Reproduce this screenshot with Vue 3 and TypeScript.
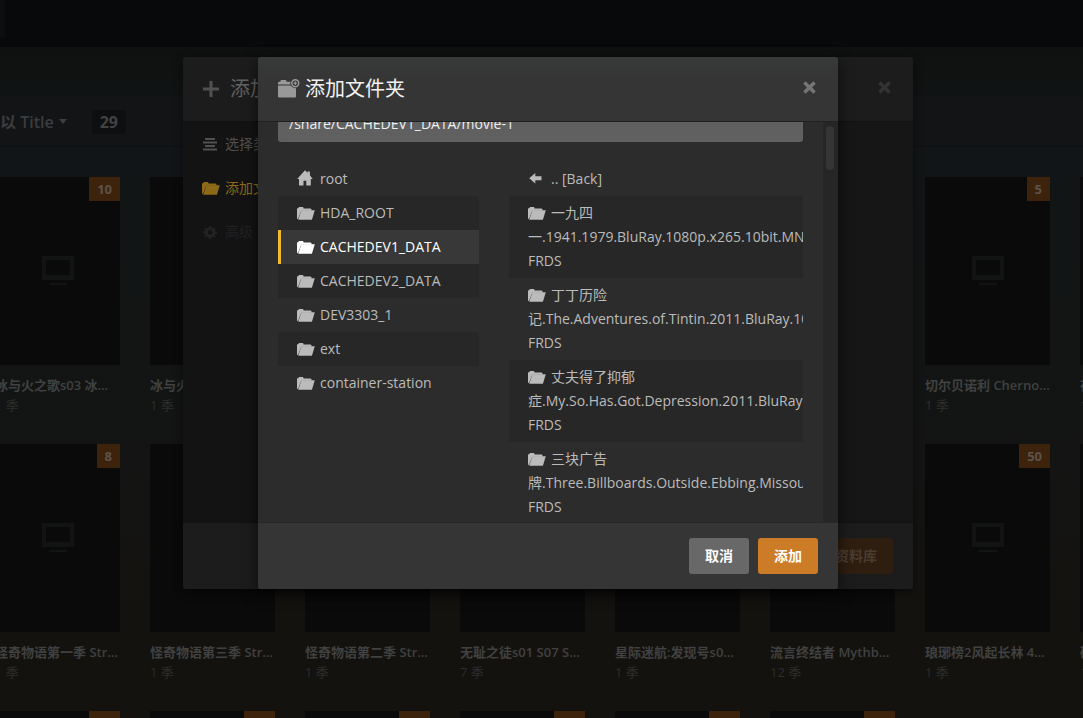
<script setup lang="ts">
import { onMounted, ref } from 'vue'

interface Show { title?: string; seasons?: string; badge?: string }

const firstRow: Show[] = [
  { title: '冰与火之歌s03 冰与火', seasons: '1 季', badge: '10' },
  { title: '冰与火之歌', seasons: '1 季' },
  {}, {}, {}, {},
  { title: '切尔贝诺利 Chernobyl', seasons: '1 季', badge: '5' },
  { title: '夜', seasons: '1 季' },
]
const secondRow: Show[] = [
  { title: '怪奇物语第一季 Stranger', seasons: '1 季', badge: '8' },
  { title: '怪奇物语第三季 Stranger', seasons: '1 季' },
  { title: '怪奇物语第二季 Stranger', seasons: '1 季' },
  { title: '无耻之徒s01 S07 Shameless', seasons: '7 季' },
  { title: '星际迷航:发现号s01 Star', seasons: '1 季' },
  { title: '流言终结者 Mythbusters', seasons: '12 季' },
  { title: '琅琊榜2风起长林 4K.2017', seasons: '1 季', badge: '50' },
  { title: '破', seasons: '1 季' },
]
const thirdRow: Show[] = Array.from({ length: 6 }, () => ({ badge: '10' }))
const rows = [firstRow, secondRow, thirdRow]

const roots = ['root', 'HDA_ROOT', 'CACHEDEV1_DATA', 'CACHEDEV2_DATA', 'DEV3303_1', 'ext', 'container-station']
const selected = ref('CACHEDEV1_DATA')
const folders = [
  '一九四一.1941.1979.BluRay.1080p.x265.10bit.MNHD-FRDS',
  '丁丁历险记.The.Adventures.of.Tintin.2011.BluRay.1080p.x265.10bit.MNHD-FRDS',
  '丈夫得了抑郁症.My.So.Has.Got.Depression.2011.BluRay.1080p.x265.10bit.MNHD-FRDS',
  '三块广告牌.Three.Billboards.Outside.Ebbing.Missouri.2017.BluRay.1080p.MNHD-FRDS',
]
const path = ref('/share/CACHEDEV1_DATA/movie-1')
const scroller = ref<HTMLElement | null>(null)

onMounted(() => {
  if (scroller.value) scroller.value.scrollTop = 36
})
</script>

<template>
  <div class="page">
    <svg class="defs" width="0" height="0" aria-hidden="true">
      <symbol id="folder" viewBox="0 0 18 13">
        <path d="M0 11.500V1.500L1.500 1V.4L2.200 0h3.600l.7.700V1.500h7.200l.8.800v1.400H4.300L.9 12.300z" />
        <path d="M4.500 3.200h13.300L14.900 12.800H1.200z" />
      </symbol>
      <symbol id="home" viewBox="0 0 16 16">
        <path d="M8 .3L10.500 2.800V1.500h2.400v3.800L15.700 9H13.800v6.500H9.300V10.700H6.500v4.800H2V9H.2z" />
      </symbol>
      <symbol id="back" viewBox="0 0 13 11">
        <path d="M6.300 0v3.300H12.500v4H6.300v3.300L.2 5.300z" />
      </symbol>
      <symbol id="close" viewBox="0 0 12 12">
        <path d="M2.500.2L6 3.600 9.500.2 11.800 2.500 8.400 6l3.400 3.500-2.300 2.300L6 8.400 2.500 11.800.2 9.500 3.600 6 .2 2.500z" />
      </symbol>
      <symbol id="monitor" viewBox="0 0 32 30">
        <path fill-rule="evenodd" d="M0 0h32v24H0zM4 4v15h24V4z" />
        <path d="M7 27h18v2H7z" />
      </symbol>
    </svg>

    <header class="topbar"><span class="search-end"></span></header>
    <div class="spacer"></div>
    <div class="toolbar">
      <button class="sort" type="button">以 Title <span class="caret"></span></button>
      <span class="count">29</span>
    </div>
    <main class="library">
      <div v-for="(row, r) in rows" :key="r" class="row">
        <article v-for="(show, i) in row" :key="i" class="card">
          <div class="cover">
            <svg class="monitor"><use href="#monitor" /></svg>
            <span v-if="show.badge" class="badge">{{ show.badge }}</span>
          </div>
          <h3 v-if="show.title" class="title">{{ show.title }}</h3>
          <p v-if="show.seasons" class="seasons">{{ show.seasons }}</p>
        </article>
      </div>
    </main>

    <div class="overlay">
      <section class="dialog wizard" aria-label="添加资料库">
        <header class="head">
          <svg class="plus" viewBox="0 0 16 16"><path d="M6.500 0h3v6.500H16v3H9.500V16h-3V9.500H0v-3h6.500z" /></svg>
          <h2>添加资料库</h2>
          <button class="close" type="button" aria-label="关闭"><svg><use href="#close" /></svg></button>
        </header>
        <div class="body">
          <nav class="steps">
            <a href="#type"><svg viewBox="0 0 18 13"><path d="M3 0h10v2H3zM1 3.500h14v2H1zM3 7h10v2H3zM1 10.500h14v2H1z" /></svg>选择类型</a>
            <a href="#folders" class="current"><svg><use href="#folder" /></svg>添加文件夹</a>
            <a href="#advanced" class="disabled"><svg viewBox="0 0 18 14"><path fill-rule="evenodd" d="M7 0h2l.5 2 1.300.6L12.600 1.500 14 3l-1 1.700.6 1.300 2 .5v1.500l-2 .5-.6 1.300 1 1.700L12.600 12.500l-1.800-1-1.300.5L9 14H7l-.5-2-1.300-.5-1.800 1L2 11l1-1.700L2.400 8 .5 7.500V6l2-.5L3 4.200 2 3l1.400-1.500 1.800 1.100L6.500 2zM8 4.500a2.500 2.500 0 100 5 2.500 2.500 0 000-5z" /></svg>高级</a>
          </nav>
        </div>
        <footer class="foot"><button class="btn primary" type="button">添加资料库</button></footer>
      </section>
    </div>

    <div class="overlay">
      <section class="dialog browser" role="dialog" aria-label="添加文件夹">
        <header class="head">
          <svg class="folder-add" viewBox="0 0 22 20">
            <path d="M0 5.500V3.500L1 2.800h1.500V1.500L3.500 1h4l1 .7v1.100H13v2.700z" />
            <path d="M0 6.500h18V17.500l-.7.900H.8L0 17.500z" />
            <circle class="ring" cx="17.300" cy="4.200" r="5" />
            <path fill-rule="evenodd" d="M17.300 0a4.200 4.200 0 110 8.400 4.200 4.200 0 010-8.400zm0 1.500a2.700 2.700 0 100 5.400 2.700 2.700 0 000-5.400z" />
            <path d="M16.700 2.500h1.200v1.100H19v1.200h-1.100v1.100h-1.200V4.800h-1.100V3.600h1.100z" />
          </svg>
          <h2>添加文件夹</h2>
          <button class="close" type="button" aria-label="关闭"><svg><use href="#close" /></svg></button>
        </header>
        <div class="body">
          <div ref="scroller" class="scroller">
            <input v-model="path" class="path" type="text" aria-label="路径" />
            <div class="columns">
              <ul class="roots">
                <li v-for="name in roots" :key="name">
                  <a href="#" :class="{ selected: selected === name }" @click.prevent="selected = name"><svg v-if="name === 'root'" class="home"><use href="#home" /></svg><svg v-else class="folder"><use href="#folder" /></svg>{{ name }}</a>
                </li>
              </ul>
              <ul class="folders">
                <li><a href="#" @click.prevent><svg class="back"><use href="#back" /></svg>.. [Back]</a></li>
                <li v-for="name in folders" :key="name">
                  <a href="#" @click.prevent><svg class="folder"><use href="#folder" /></svg>{{ name }}</a>
                </li>
              </ul>
            </div>
          </div>
          <div class="track"><div class="thumb"></div></div>
        </div>
        <footer class="foot">
          <button class="btn" type="button">取消</button>
          <button class="btn primary" type="button">添加</button>
        </footer>
      </section>
    </div>
  </div>
</template>

<style>
html, body { background: #111211; overflow: hidden; }
</style>

<style scoped>
* { box-sizing: border-box; }
.page {
  position: relative;
  height: 100vh;
  overflow: hidden;
  background: linear-gradient(#0f1110 7%, #121517 20%, #121514 45%, #131413 65%, #14120f 85%, #13120f);
  font-family: "Open Sans", "Noto Sans CJK SC", sans-serif;
  font-size: 14px;
  line-height: 24px;
  color: #bbb;
}
.defs { position: absolute; }
svg { fill: currentColor; }
button { font: inherit; border: 0; cursor: pointer; }
a { color: inherit; text-decoration: none; }
ul { list-style: none; margin: 0; padding: 0; }
h2, h3, p { margin: 0; font-weight: 400; }

.topbar { height: 47px; background: #08090b; }
.search-end { display: block; width: 5px; height: 37px; background: #0c0d0f; }
.spacer { height: 50px; }
.toolbar {
  display: flex;
  align-items: center;
  height: 50px;
  gap: 25px;
  background: #121416;
  border-bottom: 1px solid #0e1011;
}
.sort {
  display: flex;
  align-items: center;
  gap: 5px;
  padding: 0;
  background: none;
  color: #3c3d3e;
  font-size: 16px;
  font-weight: 600;
}
.caret { border: 4px solid transparent; border-top: 5px solid #3c3d3e; border-bottom: 0; }
.count {
  padding: 0 8px;
  border-radius: 3px;
  background: #0e0f10;
  color: #434344;
  font-size: 16px;
  font-weight: 700;
}
.library { margin-left: -5px; padding-top: 30px; }
.row { display: flex; gap: 30px; height: 267px; }
.card { flex: 0 0 125px; min-width: 0; }
.cover {
  position: relative;
  display: flex;
  align-items: center;
  justify-content: center;
  height: 188px;
  margin-bottom: 10px;
  background: #0a0a0a;
}
.monitor { width: 32px; height: 30px; color: #121313; }
.badge {
  position: absolute;
  top: 0;
  right: 0;
  padding: 0 8px;
  background: #3d220c;
  color: #5c534b;
  font-size: 13px;
  font-weight: 700;
}
.title, .seasons { overflow: hidden; white-space: nowrap; font-size: 13px; line-height: 20px; }
.title { text-overflow: ellipsis; font-weight: 600; color: #404140; }
.seasons { color: #2d2e2d; }

.overlay {
  position: absolute;
  inset: 57px 0 0;
  display: flex;
  align-items: flex-start;
  justify-content: center;
  padding-left: 13px;
}
.dialog { border-radius: 3px; overflow: hidden; box-shadow: 0 3px 9px rgba(0, 0, 0, 0.5); }
.head { display: flex; align-items: center; height: 65px; padding: 0 20px; border-bottom: 1px solid #212121; }
h2 { font-size: 20px; line-height: 28px; }
.close { display: flex; margin-left: auto; margin-bottom: 4px; padding: 0 2px; background: none; color: #757575; }
.close svg { width: 13px; height: 13px; }
.body { display: flex; height: 400px; }
.foot {
  display: flex;
  align-items: center;
  justify-content: flex-end;
  gap: 9px;
  height: 67px;
  padding: 0 20px;
  border-top: 1px solid #272727;
}
.btn {
  height: 36px;
  padding: 0 16px;
  border-radius: 3px;
  background: #686868;
  color: #fff;
  font-weight: 600;
}
.btn.primary { background: #cc7b27; }

.wizard { width: 730px; background: #161616; }
.wizard .head, .wizard .foot { background: #1c1c1c; border-color: #111; }
.wizard .head { color: #626262; }
.plus { width: 16px; height: 16px; margin-right: 11px; color: #505050; }
.wizard .close { color: #333; }
.steps { width: 200px; background: #131313; color: #505050; }
.steps a { display: flex; align-items: center; gap: 5px; height: 44px; padding-left: 19px; }
.steps svg { width: 18px; height: 13px; }
.steps .current { color: #8e6a18; }
.steps .disabled { color: #222; }
.wizard .btn.primary { background: #2e1e10; color: #4a3c30; }

.browser { width: 580px; background: #2c2c2c; box-shadow: 0 5px 15px rgba(0, 0, 0, 0.6); }
.browser .head { background: linear-gradient(#383939, #353535 40%); color: #f2f2f2; }
.browser .foot { background: #353535; }
.folder-add { width: 22px; height: 20px; margin-right: 5px; color: #999; }
.ring { fill: #363636; }
.scroller { flex: 1; min-width: 0; overflow: hidden; padding: 20px; }
.path {
  display: block;
  width: 100%;
  height: 36px;
  padding: 0 11px 2px;
  border: 0;
  border-radius: 3px;
  background: #606060;
  color: #eee;
  font: 14px "Open Sans", "Noto Sans CJK SC", sans-serif;
}
.columns { display: flex; gap: 30px; margin-top: 20px; }
.roots { flex: 0 0 201px; }
.folders { flex: 1; min-width: 0; }
.columns a { display: block; overflow: hidden; padding: 5px 16px; border-left: 3px solid transparent; }
.columns li:nth-child(even) { background: #272727; }
.columns .selected { background: #383838; border-color: #f0b92f; color: #fff; }
.columns svg { margin-right: 5px; vertical-align: -2px; }
.folder { width: 18px; height: 13px; }
.columns .home { width: 16px; height: 16px; margin-right: 7px; }
.columns .back { width: 13px; height: 11px; margin: 0 9px 0 1px; vertical-align: 0; }
.track { flex: 0 0 15px; padding: 4px 4px 0 3px; background: #262626; }
.thumb { height: 44px; border-radius: 4px; background: #353535; }
</style>
